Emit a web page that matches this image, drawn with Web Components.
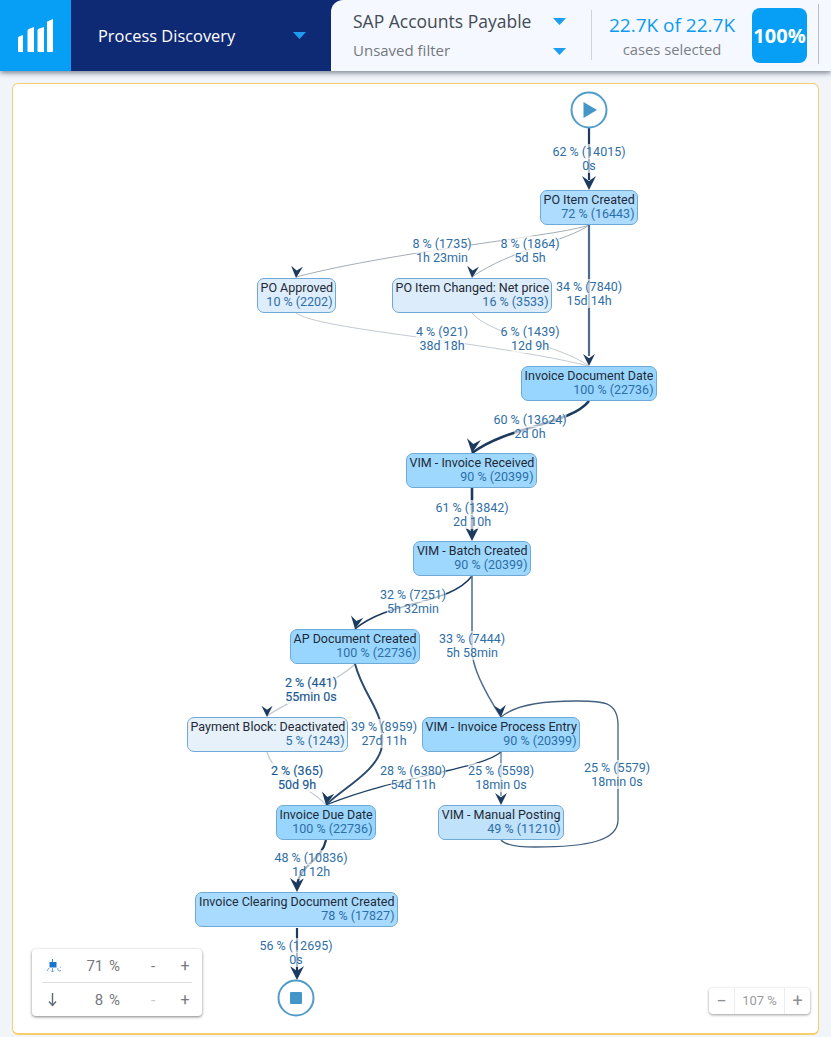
<!DOCTYPE html>
<html>
<head>
<meta charset="utf-8">
<title>Process Discovery</title>
<style>
  html, body { margin: 0; height: 100%; background: #f1f5fa; overflow: hidden; }
  body { font-family: "Open Sans", sans-serif; }
</style>
</head>
<body>
<pd-header></pd-header>
<pd-canvas>
  <pd-edges></pd-edges>

  <pd-terminal x="589" y="110" kind="start"></pd-terminal>
  <pd-terminal x="296" y="998" kind="end"></pd-terminal>

  <pd-label x="589" y="145">62 % (14015)<br>0s</pd-label>
  <pd-label x="442" y="237">8 % (1735)<br>1h 23min</pd-label>
  <pd-label x="530" y="237">8 % (1864)<br>5d 5h</pd-label>
  <pd-label x="589" y="280">34 % (7840)<br>15d 14h</pd-label>
  <pd-label x="442" y="325">4 % (921)<br>38d 18h</pd-label>
  <pd-label x="530" y="325">6 % (1439)<br>12d 9h</pd-label>
  <pd-label x="530" y="413">60 % (13624)<br>2d 0h</pd-label>
  <pd-label x="472" y="501">61 % (13842)<br>2d 10h</pd-label>
  <pd-label x="413" y="588">32 % (7251)<br>5h 32min</pd-label>
  <pd-label x="472" y="632">33 % (7444)<br>5h 58min</pd-label>
  <pd-label x="311" y="676" strong>2 % (441)<br>55min 0s</pd-label>
  <pd-label x="384" y="720">39 % (8959)<br>27d 11h</pd-label>
  <pd-label x="297" y="764" strong>2 % (365)<br>50d 9h</pd-label>
  <pd-label x="413" y="764">28 % (6380)<br>54d 11h</pd-label>
  <pd-label x="501" y="764">25 % (5598)<br>18min 0s</pd-label>
  <pd-label x="617" y="761">25 % (5579)<br>18min 0s</pd-label>
  <pd-label x="311" y="851">48 % (10836)<br>1d 12h</pd-label>
  <pd-label x="296" y="939">56 % (12695)<br>0s</pd-label>

  <pd-node x="540" y="190" w="98" fill="#addcff">PO Item Created<span slot="pct">72 % (16443)</span></pd-node>
  <pd-node x="257" y="278" w="79" fill="#deedfb">PO Approved<span slot="pct">10 % (2202)</span></pd-node>
  <pd-node x="392" y="278" w="160" fill="#dcecfa">PO Item Changed: Net price<span slot="pct">16 % (3533)</span></pd-node>
  <pd-node x="521" y="366" w="136" fill="#99d6ff">Invoice Document Date<span slot="pct">100 % (22736)</span></pd-node>
  <pd-node x="406" y="453" w="131" fill="#9fd8ff">VIM - Invoice Received<span slot="pct">90 % (20399)</span></pd-node>
  <pd-node x="413" y="541" w="118" fill="#9fd8ff">VIM - Batch Created<span slot="pct">90 % (20399)</span></pd-node>
  <pd-node x="290" y="629" w="130" fill="#99d6ff">AP Document Created<span slot="pct">100 % (22736)</span></pd-node>
  <pd-node x="187" y="717" w="161" fill="#e6f1fa">Payment Block: Deactivated<span slot="pct">5 % (1243)</span></pd-node>
  <pd-node x="422" y="717" w="158" fill="#9fd8ff">VIM - Invoice Process Entry<span slot="pct">90 % (20399)</span></pd-node>
  <pd-node x="276" y="805" w="100" fill="#99d6ff">Invoice Due Date<span slot="pct">100 % (22736)</span></pd-node>
  <pd-node x="438" y="805" w="126" fill="#c0e2fa">VIM - Manual Posting<span slot="pct">49 % (11210)</span></pd-node>
  <pd-node x="195" y="892" w="203" fill="#a8dbff">Invoice Clearing Document Created<span slot="pct">78 % (17827)</span></pd-node>

  <pd-filters></pd-filters>
  <pd-zoom></pd-zoom>
</pd-canvas>

<script>
class PdHeader extends HTMLElement {
  connectedCallback() {
    const caret = `<svg width="13" height="7" viewBox="0 0 13 7"><path d="M0 0H13L6.5 7Z" fill="#1e9df0"/></svg>`;
    this.attachShadow({ mode: "open" }).innerHTML = `
    <style>
      :host {
        display: flex;
        height: 71px;
        background: #0f2a75;
        box-shadow: 0 2px 5px rgba(30, 40, 60, 0.55);
        position: relative;
        z-index: 2;
      }
      .logo {
        width: 71px;
        background: #069ff5;
        display: flex;
        align-items: center;
        justify-content: center;
      }
      .nav {
        width: 260px;
        box-sizing: border-box;
        padding: 0 25px 0 27px;
        display: flex;
        align-items: center;
        justify-content: space-between;
        color: #fff;
        font-size: 16.4px;
      }
      .panel {
        flex: 1;
        display: flex;
        background: #f5f8fe;
        border-top-left-radius: 12px;
      }
      .select {
        width: 260px;
        box-sizing: border-box;
        padding: 6px 25px 0 22px;
      }
      .row {
        height: 30px;
        display: flex;
        align-items: center;
        justify-content: space-between;
      }
      .row .a { font-size: 17.500px; color: #444b55; }
      .row .b { font-size: 15px; color: #737880; margin-top: -2px; }
      .stats {
        width: 161px;
        box-sizing: border-box;
        border-left: 1px solid #d0d4da;
        margin: 10px 0 11px;
        text-align: center;
      }
      .stats .big { font-size: 19px; color: #0c9bf0; line-height: 30px; }
      .stats .small { font-size: 14.800px; color: #7b7f86; line-height: 19px; }
      .badge {
        width: 55px;
        height: 55px;
        margin-top: 8px;
        border-radius: 8px;
        background: #069ff5;
        color: #fff;
        font-weight: 700;
        font-size: 20px;
        display: flex;
        align-items: center;
        justify-content: center;
      }
      .end {
        width: 1px;
        margin: 4px 0 7px 11px;
        background: #b9bec6;
      }
    </style>
    <div class="logo">
      <svg width="36" height="36" viewBox="0 0 36 36">
        <path fill="#fff" d="M0 20.5q0-1.600 1.500-2.200L5 17v16.500q0 .5-.5.5H1q-1 0-1-1Z
          M9.500 13q0-1.300 1.200-1.900L16 9V34H10.500q-1 0-1-1Z
          M19.500 12.500q0-1.200 1.200-1.800L26 9V34H20.500q-1 0-1-1Z
          M29 4.500q0-.8.800-1.300L35 1V33q0 1-1 1H30q-1 0-1-1Z"/>
      </svg>
    </div>
    <div class="nav"><span>Process Discovery</span>${caret}</div>
    <div class="panel">
      <div class="select">
        <div class="row"><span class="a">SAP Accounts Payable</span>${caret}</div>
        <div class="row"><span class="b">Unsaved filter</span>${caret}</div>
      </div>
      <div class="stats">
        <div class="big">22.7K of 22.7K</div>
        <div class="small">cases selected</div>
      </div>
      <div class="badge">100%</div>
      <div class="end"></div>
    </div>`;
  }
}

class PdCanvas extends HTMLElement {
  connectedCallback() {
    this.attachShadow({ mode: "open" }).innerHTML = `
    <style>
      :host {
        display: block;
        position: absolute;
        left: 12px;
        top: 83px;
        width: 807px;
        height: 952px;
        box-sizing: border-box;
        background: #fff;
        border: 1px solid #f8cd6c;
        border-bottom-width: 2px;
        border-radius: 6px;
      }
      /* graph coordinates are page coordinates */
      .stage { position: absolute; left: -13px; top: -84px; width: 831px; height: 1037px; }
    </style>
    <div class="stage"><slot></slot></div>`;
  }
}

class PdEdges extends HTMLElement {
  connectedCallback() {
    const dark = "#1b3a5e", mid = "#4a6d90", grey = "#a3adb8", light = "#c3cad2";
    // d, stroke, width, arrow tip x, y, angle in degrees, arrow scale
    const edges = [
      ["M589 128V180", dark, 2.2, 589, 190, 0, 1],
      ["M589 225C560 236 400 250 296 277", grey, 1, 296, 278, 5, .85],
      ["M589 225C570 240 510 250 472 277", grey, 1, 472, 278, 5, .85],
      ["M589 225V356", mid, 2.2, 589, 366, 0, .85],
      ["M296 313C320 330 480 340 589 366", light, 1],
      ["M472 313C490 335 560 345 589 366", light, 1],
      ["M589 401C570 425 510 425 472 453", dark, 2.6, 472, 453, 8, 1],
      ["M472 488V532", dark, 2.6, 472, 541, 0, 1],
      ["M472 576C450 605 390 600 355 629", dark, 1.5, 355, 629, 10, .9],
      ["M472 576V650C472 670 490 700 501 717", mid, 1.5, 501, 717, -5, .85],
      ["M355 664C340 680 290 700 267 716", light, 1.2, 267, 717, 0, .8],
      ["M355 664C365 700 385 710 382 745C380 770 340 790 326 805", "#2b4a6f", 2, 326, 805, 10, .9],
      ["M267 752C275 780 310 785 326 805", light, 1.2],
      ["M501 752C480 770 400 775 326 805", "#1d3f63", 1.2],
      ["M501 752V796", mid, 1.2, 501, 805, 0, .85],
      ["M501 840C506 846 520 847 535 847C590 847 618 840 618 820V725C618 700 600 701 575 701C545 701 515 705 501 717", "#41607f", 1.3],
      ["M326 840C322 860 300 865 297 885", dark, 2.2, 297, 892, 0, 1],
      ["M297 928V972", dark, 2.2, 297, 980, 0, 1],
    ];
    const paths = edges.map(([d, stroke, w, x, y, a, s]) => {
      let out = `<path d="${d}" fill="none" stroke="${stroke}" stroke-width="${w}"/>`;
      if (x !== undefined)
        out += `<path d="M0 0L-7 -14L0 -9L7 -14Z" fill="#1b3a5e" transform="translate(${x} ${y}) rotate(${a}) scale(${s})"/>`;
      return out;
    });
    this.attachShadow({ mode: "open" }).innerHTML = `
    <style>
      :host { display: block; position: absolute; left: 0; top: 0; }
      svg { display: block; }
    </style>
    <svg width="831" height="1037" viewBox="0 0 831 1037">${paths.join("")}</svg>`;
  }
}

class PdNode extends HTMLElement {
  connectedCallback() {
    const a = (n) => this.getAttribute(n);
    this.attachShadow({ mode: "open" }).innerHTML = `
    <style>
      :host {
        display: block;
        position: absolute;
        left: ${a("x")}px;
        top: ${a("y")}px;
        width: ${a("w")}px;
        height: 35px;
        box-sizing: border-box;
        padding: 2px 2.500px 0;
        background: ${a("fill")};
        border: 1px solid #6fa9d6;
        border-radius: 7px;
        font: 12.500px/14px Roboto, sans-serif;
        text-align: right;
        white-space: nowrap;
        color: #1e2a36;
      }
      .pct { color: #2c6ea6; }
    </style>
    <div><slot></slot></div>
    <div class="pct"><slot name="pct"></slot></div>`;
  }
}

class PdLabel extends HTMLElement {
  connectedCallback() {
    const a = (n) => this.getAttribute(n);
    const strong = this.hasAttribute("strong");
    this.attachShadow({ mode: "open" }).innerHTML = `
    <style>
      :host {
        display: block;
        position: absolute;
        left: ${a("x")}px;
        top: ${a("y")}px;
        transform: translateX(-50%);
        font: 12.500px/14px Roboto, sans-serif;
        text-align: center;
        white-space: nowrap;
        color: ${strong ? "#1a5a92" : "#2f6ea5"};
        ${strong ? "-webkit-text-stroke: 0.15px #1a5a92;" : ""}
      }
      /* the edge fades out behind each line of text */
      span { background: rgba(255, 255, 255, 0.65); }
    </style>
    <span><slot></slot></span>`;
  }
}

class PdTerminal extends HTMLElement {
  connectedCallback() {
    const a = (n) => this.getAttribute(n);
    const glyph = a("kind") === "start"
      ? `<path d="M13.500 11L27 19L13.500 27Z" fill="#4496c8"/>`
      : `<rect x="13" y="13" width="12" height="12" rx="1" fill="#4496c8"/>`;
    this.attachShadow({ mode: "open" }).innerHTML = `
    <style>
      :host {
        display: block;
        position: absolute;
        left: ${a("x") - 19}px;
        top: ${a("y") - 19}px;
        width: 38px;
        height: 38px;
      }
      svg { display: block; }
    </style>
    <svg width="38" height="38" viewBox="0 0 38 38">
      <circle cx="19" cy="19" r="17.500" fill="#fff" stroke="#529cc8" stroke-width="2"/>
      ${glyph}
    </svg>`;
  }
}

class PdFilters extends HTMLElement {
  connectedCallback() {
    this.attachShadow({ mode: "open" }).innerHTML = `
    <style>
      :host {
        display: block;
        position: absolute;
        left: 32px;
        top: 949px;
        width: 170px;
        height: 67px;
        box-sizing: border-box;
        padding: 0 10px;
        background: #fff;
        border-radius: 4px;
        box-shadow: 0 1px 3px rgba(0, 0, 0, 0.5);
        font: 15px Roboto, sans-serif;
        color: #77797c;
      }
      .row {
        height: 33px;
        display: grid;
        grid-template-columns: 30px 48px 50px 22px;
        align-items: center;
      }
      .row + .row { border-top: 1px solid #dcdee0; }
      .ico { display: flex; padding-left: 4px; }
      .val { text-align: right; }
      .val span { margin-left: 2px; }
      .m { text-align: center; padding-left: 16px; }
      .m.off { color: #c5c7c9; }
      .p { text-align: center; padding-left: 8px; font-size: 16px; }
    </style>
    <div class="row">
      <div class="ico">
        <svg width="15" height="14" viewBox="0 0 15 14">
          <path d="M6.500 0v3" stroke="#2a83d0" stroke-width="1"/>
          <rect x="3.500" y="3" width="7" height="5.500" fill="#1a74cb"/>
          <path d="M1 12l2-3M6.500 9v4M5 11.500l1.500 1.500 1.500-1.500M12 9a2 2 0 1 0 2-1" fill="none" stroke="#4a90cf" stroke-width=".8"/>
        </svg>
      </div>
      <div class="val">71<span> %</span></div>
      <div class="m">-</div>
      <div class="p">+</div>
    </div>
    <div class="row">
      <div class="ico">
        <svg width="15" height="15" viewBox="0 0 15 15">
          <path d="M6.500 1V13M3 9.500L6.500 13.500L10 9.500" fill="none" stroke="#5f6b78" stroke-width="1.400"/>
        </svg>
      </div>
      <div class="val">8<span> %</span></div>
      <div class="m off">-</div>
      <div class="p">+</div>
    </div>`;
  }
}

class PdZoom extends HTMLElement {
  connectedCallback() {
    this.attachShadow({ mode: "open" }).innerHTML = `
    <style>
      :host {
        display: flex;
        position: absolute;
        left: 709px;
        top: 988px;
        width: 101px;
        height: 26px;
        background: #fff;
        border-radius: 4px;
        box-shadow: 0 1px 3px rgba(0, 0, 0, 0.4);
        font: 13px/26px Roboto, sans-serif;
        color: #9a9c9f;
        text-align: center;
      }
      div { box-sizing: border-box; }
      .b { width: 25px; font-size: 18px; color: #8d8f92; }
      .t { flex: 1; border: solid #ececec; border-width: 0 1px; }
    </style>
    <div class="b">−</div>
    <div class="t">107 %</div>
    <div class="b">+</div>`;
  }
}

customElements.define("pd-header", PdHeader);
customElements.define("pd-canvas", PdCanvas);
customElements.define("pd-edges", PdEdges);
customElements.define("pd-node", PdNode);
customElements.define("pd-label", PdLabel);
customElements.define("pd-terminal", PdTerminal);
customElements.define("pd-filters", PdFilters);
customElements.define("pd-zoom", PdZoom);
</script>
</body>
</html>
